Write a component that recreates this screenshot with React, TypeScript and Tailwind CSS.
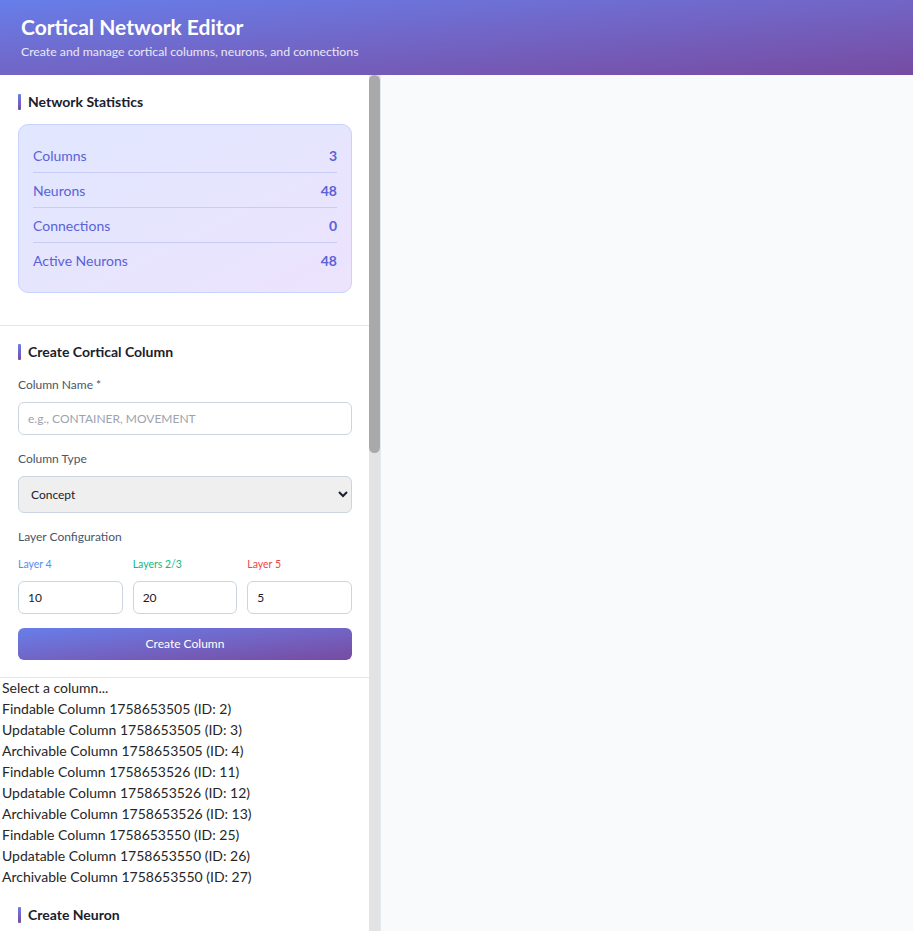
import React from 'react'

const stats = [
  { label: 'Columns', value: '3' },
  { label: 'Neurons', value: '48' },
  { label: 'Connections', value: '0' },
  { label: 'Active Neurons', value: '48' },
]

const columnOptions = [
  'Select a column...',
  'Findable Column 1758653505 (ID: 2)',
  'Updatable Column 1758653505 (ID: 3)',
  'Archivable Column 1758653505 (ID: 4)',
  'Findable Column 1758653526 (ID: 11)',
  'Updatable Column 1758653526 (ID: 12)',
  'Archivable Column 1758653526 (ID: 13)',
  'Findable Column 1758653550 (ID: 25)',
  'Updatable Column 1758653550 (ID: 26)',
  'Archivable Column 1758653550 (ID: 27)',
]

function SectionTitle({ children }: { children: React.ReactNode }) {
  return (
    <div className="flex items-center gap-[7px] h-4">
      <div className="w-[3px] h-4 rounded-[1px] bg-gradient-to-b from-[#667eea] to-[#764ba2]" />
      <h3 className="text-[14px] font-bold text-[#1a202c] leading-4">{children}</h3>
    </div>
  )
}

const inputCls = 'w-full h-[33px] rounded-[6px] border border-[#cbd5e1] bg-white px-[9px] text-[12px] text-[#1a202c] placeholder:text-[#9ca3af] outline-none'

export default function App() {
  return (
    <div className="h-screen flex flex-col font-['Lato','Noto_Sans',sans-serif] text-[#2d3748]">
      <header className="h-[75px] shrink-0 px-[21px] pt-[13px] text-white bg-gradient-to-br from-[#667eea] to-[#764ba2]">
        <h1 className="text-[21px] font-bold leading-[27px]">Cortical Network Editor</h1>
        <p className="text-[12.25px] leading-4 mt-[4px] text-white/85">Create and manage cortical columns, neurons, and connections</p>
      </header>

      <div className="flex-1 flex min-h-0">
        <aside className="w-[381px] shrink-0 flex bg-white border-r border-[#e2e8f0]">
          <div className="w-[369px] shrink-0 overflow-hidden">
            {/* stats */}
            <section className="pl-[18px] pr-[17px] pt-[19px] pb-[32px] border-b border-[#e2e8f0]">
              <SectionTitle>Network Statistics</SectionTitle>
              <div className="mt-[14px] rounded-[10px] border border-[#c7d2fe] bg-gradient-to-br from-[#e0e7ff] to-[#ede3fd] px-[14px] pt-[13px] pb-[14px]">
                {stats.map((s, i) => (
                  <div key={s.label} className={`h-[35px] flex items-center justify-between text-[14px] text-[#5a62d6] ${i < stats.length - 1 ? 'border-b border-[#c9cdf5]' : ''}`}>
                    <span>{s.label}</span>
                    <span className="font-bold">{s.value}</span>
                  </div>
                ))}
              </div>
            </section>

            {/* create column */}
            <section className="pl-[18px] pr-[17px] pt-[18px] pb-[17px] border-b border-[#e2e8f0]">
              <SectionTitle>Create Cortical Column</SectionTitle>
              <label className="block mt-[17px] text-[12px] leading-4 text-[#4a5568]">Column Name *</label>
              <input className={`${inputCls} mt-[9px] h-[33px] text-[11px]`} placeholder="e.g., CONTAINER, MOVEMENT" />
              <label className="block mt-[16px] text-[12px] leading-4 text-[#4a5568]">Column Type</label>
              <select className="mt-[9px] w-full h-[37px] rounded-[6px] border border-[#cbd5e1] bg-[#efefef] pl-[8px] pr-[6px] text-[12px] text-[#1a202c]" defaultValue="Concept">
                <option>Concept</option>
                <option>Object</option>
                <option>Action</option>
              </select>
              <label className="block mt-[16px] text-[12px] leading-4 text-[#4a5568]">Layer Configuration</label>
              <div className="mt-[12px] grid grid-cols-3 gap-[10px]">
                <div>
                  <div className="text-[10.5px] leading-[14px] text-[#4f8ef7]">Layer 4</div>
                  <input className={`${inputCls} mt-[10px] h-[32px]`} defaultValue="10" />
                </div>
                <div>
                  <div className="text-[10.5px] leading-[14px] text-[#10b981]">Layers 2/3</div>
                  <input className={`${inputCls} mt-[10px] h-[32px]`} defaultValue="20" />
                </div>
                <div>
                  <div className="text-[10.5px] leading-[14px] text-[#ef4444]">Layer 5</div>
                  <input className={`${inputCls} mt-[10px] h-[32px]`} defaultValue="5" />
                </div>
              </div>
              <button className="mt-[14px] w-full h-[32px] rounded-[6px] bg-gradient-to-br from-[#667eea] to-[#764ba2] text-white text-[12px]">Create Column</button>
            </section>

            {/* column list */}
            <div className="-mt-px pl-[2px] text-[14px] leading-[21px] text-[#262626]">
              {columnOptions.map((o) => (
                <div key={o}>{o}</div>
              ))}
            </div>

            {/* create neuron */}
            <section className="pl-[18px] pr-[17px] pt-[20px] pb-[17px]">
              <SectionTitle>Create Neuron</SectionTitle>
            </section>
          </div>

          {/* scrollbar */}
          <div className="w-[11px] shrink-0 bg-[#e3e3e3] flex flex-col">
            <div className="h-[378px] rounded-full bg-[#a9a9a9]" />
          </div>
        </aside>

        <main className="flex-1 bg-[#f8fafc]" />
      </div>
    </div>
  )
}
